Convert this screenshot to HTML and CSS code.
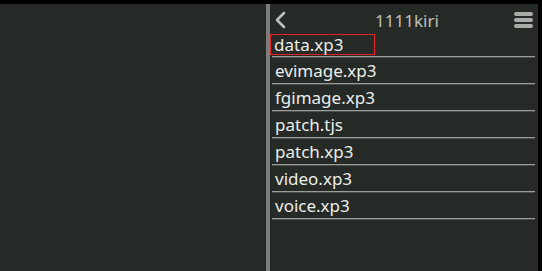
FILE: index.html
```html
<!DOCTYPE html>
<html lang="en">
<head>
  <meta charset="UTF-8" />
  <title>1111kiri</title>
  <link rel="stylesheet" href="styles.css">
</head>
<body>
  <div class="status-bar"></div>
  <div class="screen">
    <div class="left-pane"></div>
    <div class="divider"></div>
    <div class="browser">
      <div class="header">
        <svg class="back" width="14" height="18" viewBox="0 0 14 18">
          <path d="M10 2 L3 9 L10 16" fill="none" stroke="#bdbfbc" stroke-width="2.6" stroke-linecap="round" stroke-linejoin="round"/>
        </svg>
        <div class="title">1111kiri</div>
        <div class="menu">
          <span></span><span></span><span></span>
        </div>
      </div>
      <ul class="files">
        <li><span class="name focused">data.xp3</span></li>
        <li><span class="name">evimage.xp3</span></li>
        <li><span class="name">fgimage.xp3</span></li>
        <li><span class="name">patch.tjs</span></li>
        <li><span class="name">patch.xp3</span></li>
        <li><span class="name">video.xp3</span></li>
        <li><span class="name">voice.xp3</span></li>
      </ul>
    </div>
    <div class="edge"></div>
  </div>
</body>
</html>
```

FILE: styles.css
```css
:root {
  --bg: #262a27;
  --divider: #7b7d7a;
  --text: #ebedea;
  --title: #bdbfbc;
  --line-hi: #9b9d9a;
  --line-lo: #4b4e4b;
}

* {
  box-sizing: border-box;
  margin: 0;
  padding: 0;
}

body {
  width: 542px;
  height: 271px;
  overflow: hidden;
  background: #000;
  font-family: "Noto Sans", "Open Sans", sans-serif;
  color: var(--text);
}

.status-bar {
  height: 4px;
  background: #000;
}

.screen {
  display: flex;
  height: 267px;
}

.left-pane {
  width: 266px;
  background: var(--bg);
}

.divider {
  width: 4px;
  background: var(--divider);
}

.browser {
  flex: 1;
  background: var(--bg);
}

.edge {
  width: 4px;
  background: #000;
}

.header {
  height: 27px;
  display: flex;
  align-items: center;
  padding: 5px 5px 0 4px;
}

.back {
  flex: none;
}

.title {
  flex: 1;
  text-align: center;
  font-size: 17px;
  color: var(--title);
  padding-left: 12px;
}

.menu {
  width: 19px;
  display: flex;
  flex-direction: column;
  gap: 2px;
}

.menu span {
  height: 4px;
  border-radius: 2px;
  background: #a9ada8;
}

.files {
  list-style: none;
}

.files li {
  height: 27px;
  margin: 0 3px 0 2px;
  border-bottom: 1px solid var(--line-lo);
  box-shadow: inset 0 -2px 0 -1px var(--line-hi);
  display: flex;
  align-items: center;
}

.name {
  display: inline-block;
  font-size: 17px;
  line-height: 20px;
  padding-left: 3px;
}

.focused {
  width: 105px;
  height: 21px;
  margin-left: -2px;
  padding-left: 3px;
  border: 1px solid #e52222;
}
```
